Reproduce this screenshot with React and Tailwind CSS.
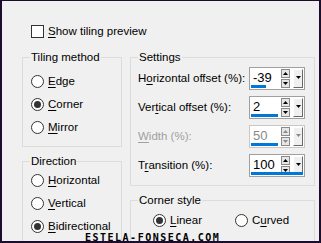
import React from 'react'

const font = { fontFamily: '"Liberation Sans", Arial, sans-serif' }

const Key = ({ children }) => (
  <span className="underline decoration-1 underline-offset-[2px]">{children}</span>
)

const Radio = ({ checked, children }) => (
  <div className="flex h-[23px] items-center gap-[4px]">
    <span className="flex h-[13px] w-[13px] items-center justify-center rounded-full border border-[#333] bg-white">
      {checked && <span className="h-[7px] w-[7px] rounded-full bg-[#333]"></span>}
    </span>
    <span className="whitespace-nowrap text-[11.5px] leading-none text-black">{children}</span>
  </div>
)

const Group = ({ title, className = '', children }) => (
  <fieldset className="border border-[#dcdcdc]">
    <legend className="ml-[7px] px-px text-[11.5px] leading-[14px] whitespace-nowrap text-black">{title}</legend>
    <div className={className}>{children}</div>
  </fieldset>
)

const Tri = ({ down, grey }) => (
  <svg width="5" height="3" viewBox="0 0 5 3">
    <path d={down ? 'M0 0H5L2.5 3Z' : 'M0 3H5L2.5 0Z'} fill={grey ? '#8a8a8a' : '#000'} />
  </svg>
)

const Spin = ({ value, bar, disabled }) => (
  <div className={`relative flex h-[23px] w-[56px] shrink-0 border bg-white ${disabled ? 'border-[#c8c8c8]' : 'border-[#a0a0a0]'}`}>
    <div className={`flex flex-1 items-center pl-[3px] pb-[2px] text-[13px] leading-none ${disabled ? 'text-[#8a8a8a]' : 'text-black'}`}>
      {value}
    </div>
    <div className="flex flex-col gap-px pt-px pr-[3px]">
      <span className="flex h-[9px] w-[9px] items-center justify-center border border-[#8a8a8a] bg-[#e6e6e6]"><Tri grey={disabled} /></span>
      <span className="flex h-[9px] w-[9px] items-center justify-center border border-[#8a8a8a] bg-[#e6e6e6]"><Tri down grey={disabled} /></span>
    </div>
    <div className="pt-px pr-px">
      <span className="flex h-[19px] w-[10px] justify-center border-t border-l border-t-white border-l-white border-r border-b border-r-[#696969] border-b-[#696969] bg-[#f0f0f0] pt-[6px]">
        <Tri down grey={disabled} />
      </span>
    </div>
    <span className={`absolute bottom-px left-px h-[3px] bg-[#0078d7] ${bar}`}></span>
  </div>
)

const Row = ({ label, disabled, children }) => (
  <div className="flex h-[23px] items-center justify-between">
    <span className={`whitespace-nowrap text-[11.5px] leading-none ${disabled ? 'text-[#a0a0a0]' : 'text-black'}`}>{label}</span>
    {children}
  </div>
)

export default function App() {
  return (
    <div className="h-[243px] w-[321px] overflow-hidden bg-[#1b0d2b] pt-px pr-[2px] pb-[2px] pl-[2px]" style={font}>
      <div className="relative h-full overflow-hidden bg-[#f0f0f0] pl-[20px]">
        {/* checkbox */}
        <div className="mt-[24px] ml-[9px] flex h-[13px] items-center gap-[4px]">
          <span className="h-[13px] w-[13px] border border-[#333] bg-white"></span>
          <span className="text-[11.5px] leading-none text-black"><Key>S</Key>how tiling preview</span>
        </div>

        <div className="mt-[12px] flex gap-[8px]">
          {/* left column */}
          <div className="flex w-[100px] flex-col">
            <Group title="Tiling method" className="pt-[6px] pb-[7px] pl-[8px]">
              <Radio><Key>E</Key>dge</Radio>
              <Radio checked><Key>C</Key>orner</Radio>
              <Radio><Key>M</Key>irror</Radio>
            </Group>
            <div className="mt-[7px]">
              <Group title="Direction" className="pt-px pb-[20px] pl-[8px]">
                <Radio><Key>H</Key>orizontal</Radio>
                <Radio><Key>V</Key>ertical</Radio>
                <Radio checked><Key>B</Key>idirectional</Radio>
              </Group>
            </div>
          </div>

          {/* right column */}
          <div className="flex w-[185px] flex-col">
            <Group title="Settings" className="flex flex-col gap-[6px] pt-[3px] pr-[9px] pb-[8px] pl-[7px]">
              <Row label={<>H<Key>o</Key>rizontal offset (%):</>}><Spin value="-39" bar="w-[15px]" /></Row>
              <Row label={<>Ver<Key>t</Key>ical offset (%):</>}><Spin value="2" bar="w-[27px]" /></Row>
              <Row label={<><Key>W</Key>idth (%):</>} disabled><Spin value="50" bar="w-[27px]" disabled /></Row>
              <Row label={<>T<Key>r</Key>ansition (%):</>}><Spin value="100" bar="w-[52px]" /></Row>
            </Group>
            <div className="mt-[7px]">
              <Group title="Corner style" className="flex pt-[2px] pb-[20px] pl-[22px]">
                <div className="w-[82px]"><Radio checked><Key>L</Key>inear</Radio></div>
                <Radio>C<Key>u</Key>rved</Radio>
              </Group>
            </div>
          </div>
        </div>

        {/* watermark */}
        <div
          className="absolute top-[232px] left-[83px] text-[10px] font-bold leading-none tracking-[1.5px] text-black"
          style={{ fontFamily: '"DejaVu Sans Mono", "Liberation Mono", monospace' }}
        >
          ESTELA-FONSECA.COM
        </div>
      </div>
    </div>
  )
}
